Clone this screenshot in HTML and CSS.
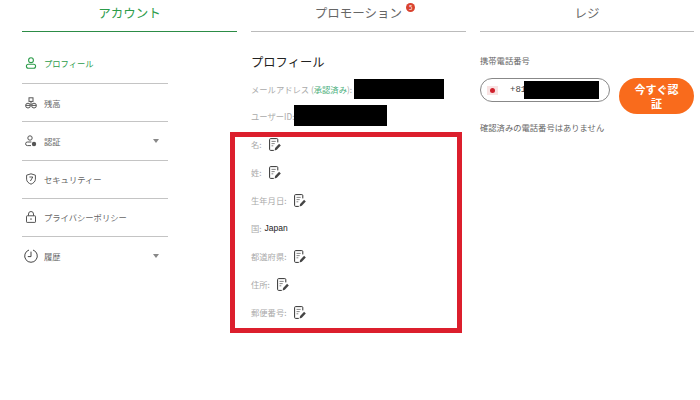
FILE: index.html
```html
<!DOCTYPE html>
<html lang="ja">
<head>
  <meta charset="UTF-8">
  <title>アカウント</title>
  <link rel="stylesheet" href="styles.css">
</head>
<body>

<svg class="sprites" width="0" height="0">
  <symbol id="edit" viewBox="0 0 12 13">
    <path d="M8.8 4.4V1.6a1 1 0 0 0-1-1H1.6a1 1 0 0 0-1 1v9.8a1 1 0 0 0 1 1h3.2" fill="none" stroke="#333" stroke-width="1"/>
    <path d="M2.5 3.4h4.2M2.5 5.6h3.2M2.5 7.8h1.8" fill="none" stroke="#666" stroke-width=".8"/>
    <path d="M5.6 12.4l.5-2.3 4-4.3 1.7 1.7-4 4.3z" fill="#444"/>
  </symbol>
</svg>

<div class="tabs">
  <div class="tab tab-active">アカウント</div>
  <div class="tab"><span class="tab-label">プロモーション<span class="badge">5</span></span></div>
  <div class="tab">レジ</div>
</div>

<div class="columns">
  <ul class="nav">
    <li class="nav-item nav-active">
      <svg class="nav-icon" viewBox="0 0 12 12"><circle cx="6" cy="3.2" r="2.4" fill="none" stroke="#2c9c4a" stroke-width="1.1"/><rect x="1.4" y="7.2" width="9.2" height="4" rx="2" fill="none" stroke="#2c9c4a" stroke-width="1.1"/></svg>
      プロフィール
    </li>
    <li class="nav-item">
      <svg class="nav-icon" viewBox="0 0 12 12"><rect x="4" y=".8" width="4" height="3.6" fill="none" stroke="#555" stroke-width="1"/><circle cx="3" cy="8.6" r="2.4" fill="none" stroke="#555" stroke-width="1"/><circle cx="9" cy="8.6" r="2.4" fill="none" stroke="#555" stroke-width="1"/><path d="M.8 8.4h4.4M6.8 8.4h4.4M6 4.4v4" fill="none" stroke="#555" stroke-width="1"/></svg>
      残高
    </li>
    <li class="nav-item">
      <svg class="nav-icon" viewBox="0 0 12 12"><circle cx="5" cy="3" r="2.2" fill="none" stroke="#555" stroke-width="1"/><path d="M6 10.6H2.4a1.6 1.6 0 0 1 0-3.6h4" fill="none" stroke="#555" stroke-width="1"/><circle cx="9" cy="9" r="2.2" fill="#555"/></svg>
      認証
      <span class="caret"></span>
    </li>
    <li class="nav-item">
      <svg class="nav-icon" viewBox="0 0 12 12"><path d="M6 .8l4.4 1.4v4c0 2.4-2 4-4.4 5-2.4-1-4.4-2.6-4.4-5v-4z" fill="none" stroke="#555" stroke-width="1"/><path d="M4.4 4h3.4L5.4 8" fill="none" stroke="#555" stroke-width="1"/></svg>
      セキュリティー
    </li>
    <li class="nav-item">
      <svg class="nav-icon" viewBox="0 0 12 12"><rect x="1.5" y="4.8" width="9" height="6.6" rx=".6" fill="none" stroke="#555" stroke-width="1"/><path d="M3.5 4.8V3a2.5 2.5 0 0 1 5 0v1.8" fill="none" stroke="#555" stroke-width="1"/><path d="M6 7.2v1.8" stroke="#555" stroke-width="1"/></svg>
      プライバシーポリシー
    </li>
    <li class="nav-item">
      <svg class="nav-icon nav-icon-big" viewBox="0 0 14 14"><path d="M5 1A6.3 6.3 0 1 0 9 1" fill="none" stroke="#444" stroke-width="1"/><path d="M7 2.6v5H3.8" fill="none" stroke="#444" stroke-width="1"/></svg>
      履歴
      <span class="caret"></span>
    </li>
  </ul>

  <div class="profile">
    <h2>プロフィール</h2>
    <div class="email-row">メールアドレス (<span class="verified">承認済み</span>):<span class="redact redact-email"></span></div>
    <div class="id-row">ユーザーID:<span class="redact redact-id"></span></div>
    <div class="fields">
      <div class="field">名:<svg class="edit"><use href="#edit"/></svg></div>
      <div class="field">姓:<svg class="edit"><use href="#edit"/></svg></div>
      <div class="field">生年月日:<svg class="edit"><use href="#edit"/></svg></div>
      <div class="field">国: <span class="value">Japan</span></div>
      <div class="field">都道府県:<svg class="edit"><use href="#edit"/></svg></div>
      <div class="field">住所:<svg class="edit"><use href="#edit"/></svg></div>
      <div class="field">郵便番号:<svg class="edit"><use href="#edit"/></svg></div>
    </div>
  </div>

  <div class="phone">
    <div class="phone-label">携帯電話番号</div>
    <div class="phone-row">
      <div class="phone-input">
        <span class="flag"><span class="flag-dot"></span></span>
        <span class="dial">+81</span>
        <span class="redact redact-phone"></span>
      </div>
      <button class="verify">今すぐ認証</button>
    </div>
    <div class="phone-note">確認済みの電話番号はありません</div>
  </div>
</div>

</body>
</html>
```

FILE: styles.css
```css
* {
  box-sizing: border-box;
}
body {
  margin: 0;
  width: 700px;
  height: 400px;
  overflow: hidden;
  background: #fff;
  font-family: 'Noto Sans CJK JP', 'Liberation Sans', sans-serif;
  color: #999;
}
.sprites {
  position: absolute;
}
.tabs, .columns {
  display: grid;
  grid-template-columns: 215px 215px 214px;
  column-gap: 14px;
  padding-left: 22px;
}
.tab {
  height: 32px;
  padding-top: 3px;
  font-size: 12.5px;
  line-height: 20px;
  text-align: center;
  color: #666;
  border-bottom: 1px solid #bbb;
}
.tab-active {
  color: #2c9c4a;
  border-bottom-color: #2c8c46;
}
.tab-label {
  position: relative;
}
.badge {
  position: absolute;
  top: 0;
  right: -13px;
  width: 9px;
  height: 9px;
  border-radius: 50%;
  background: #d9432f;
  color: #fff;
  font-size: 6px;
  line-height: 9px;
}

/* left menu */
.nav {
  list-style: none;
  margin: 14px 0 0;
  padding: 0;
  width: 146px;
}
.nav-item {
  display: flex;
  align-items: center;
  height: 38.2px;
  padding: 0 9px 0 2px;
  font-size: 8.3px;
  color: #666;
  border-bottom: 1px solid #c4c4c4;
}
.nav-item:last-child {
  border-bottom: none;
}
.nav-active {
  padding-bottom: 3px;
  color: #2c9c4a;
}
.nav-icon {
  width: 12px;
  height: 12px;
  margin: 0 7px 0 1px;
  flex: none;
}
.nav-icon-big {
  width: 14px;
  height: 14px;
  margin: 0 6px 0 0;
}
.caret {
  margin-left: auto;
  border-left: 3px solid transparent;
  border-right: 3px solid transparent;
  border-top: 4px solid #888;
}

/* middle column */
.profile h2 {
  margin: 20px 0 0;
  font-size: 12.3px;
  line-height: 20px;
  font-weight: 400;
  color: #222;
}
.email-row, .id-row {
  display: flex;
  align-items: center;
  font-size: 8.3px;
  color: #aaa;
}
.email-row {
  height: 20px;
  margin-top: 7px;
}
.id-row {
  height: 21px;
  margin-top: 6px;
}
.verified {
  color: #4caf7d;
}
.redact {
  display: block;
  background: #000;
}
.redact-email {
  width: 90px;
  height: 20px;
  margin-left: 2px;
}
.redact-id {
  width: 93px;
  height: 21px;
}
.fields {
  display: flex;
  flex-direction: column;
  gap: 12px;
  width: 232px;
  height: 201px;
  margin: 6px 0 0 -21px;
  padding-left: 16px;
  border: 5px solid #dc1f2d;
}
.field {
  display: flex;
  align-items: center;
  height: 16px;
  font-size: 8.3px;
  color: #aaa;
}
.field:first-child {
  margin-top: -1px;
}
.value {
  margin-left: 3px;
  font-family: 'Liberation Sans', sans-serif;
  font-size: 8.5px;
  color: #222;
}
.edit {
  width: 12px;
  height: 13px;
  margin-left: 7px;
}

/* right column */
.phone-label {
  margin-top: 22px;
  font-size: 8.3px;
  line-height: 12px;
  color: #666;
}
.phone-row {
  display: flex;
  align-items: flex-start;
  gap: 9px;
  margin-top: 12px;
}
.phone-input {
  display: flex;
  align-items: center;
  width: 130px;
  height: 24px;
  padding-left: 6px;
  border: 1px solid #888;
  border-radius: 12px;
}
.flag {
  display: flex;
  align-items: center;
  justify-content: center;
  width: 11px;
  height: 9px;
  background: #f8e2e2;
}
.flag-dot {
  width: 5px;
  height: 5px;
  border-radius: 50%;
  background: #d0202c;
}
.dial {
  width: 14px;
  margin-left: 12px;
  white-space: nowrap;
  font-family: 'Liberation Mono', monospace;
  font-size: 9px;
  color: #444;
}
.redact-phone {
  width: 75px;
  height: 18px;
}
.verify {
  width: 75px;
  height: 36px;
  padding: 0 14px;
  border: none;
  border-radius: 18px;
  background: #f96b1c;
  color: #fff;
  font-family: inherit;
  font-size: 11px;
  font-weight: 700;
  line-height: 14px;
}
.phone-note {
  margin-top: 7px;
  font-size: 8.3px;
  line-height: 12px;
  color: #666;
}
```
